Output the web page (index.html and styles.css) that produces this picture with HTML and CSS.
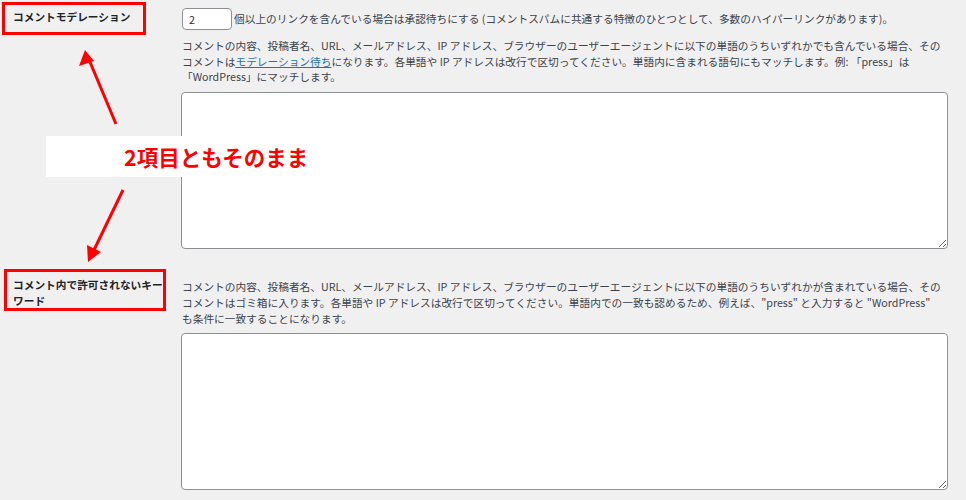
FILE: index.html
```html
<!DOCTYPE html>
<html lang="ja">
<head>
    <meta charset="UTF-8">
    <title>ディスカッション設定</title>
    <link rel="stylesheet" href="styles.css">
</head>
<body>
    <div class="page">
        <table class="form-table">
            <tr>
                <th>コメントモデレーション</th>
                <td>
                    <div class="links-line"><input class="small-text" type="text" value="2">個以上のリンクを含んでいる場合は承認待ちにする (コメントスパムに共通する特徴のひとつとして、多数のハイパーリンクがあります)。</div>
                    <p class="description">コメントの内容、投稿者名、URL、メールアドレス、IP アドレス、ブラウザーのユーザーエージェントに以下の単語のうちいずれかでも含んでいる場合、その<br>コメントは<a href="#">モデレーション待ち</a>になります。各単語や IP アドレスは改行で区切ってください。単語内に含まれる語句にもマッチします。例: 「press」は<br>「WordPress」にマッチします。</p>
                    <textarea class="keys"></textarea>
                </td>
            </tr>
            <tr>
                <th>コメント内で許可されないキーワード</th>
                <td>
                    <p class="description">コメントの内容、投稿者名、URL、メールアドレス、IP アドレス、ブラウザーのユーザーエージェントに以下の単語のうちいずれかが含まれている場合、その<br>コメントはゴミ箱に入ります。各単語や IP アドレスは改行で区切ってください。単語内での一致も認めるため、例えば、"press" と入力すると "WordPress"<br>も条件に一致することになります。</p>
                    <textarea class="keys"></textarea>
                </td>
            </tr>
        </table>

        <!-- annotations -->
        <div class="mark mark-1"></div>
        <div class="mark mark-2"></div>
        <div class="callout">2項目ともそのまま</div>
        <svg class="arrows" width="966" height="500" viewBox="0 0 966 500">
            <line x1="116" y1="124" x2="90" y2="62" stroke="#ff0000" stroke-width="3"/>
            <polygon points="85,50 79,66 94,61" fill="#ff0000"/>
            <line x1="123" y1="190" x2="94" y2="250" stroke="#ff0000" stroke-width="3"/>
            <polygon points="88,262 87,245 101,252" fill="#ff0000"/>
        </svg>
    </div>
</body>
</html>
```

FILE: styles.css
```css
body {
    margin: 0;
    background: #f0f0f1;
    font-family: "Noto Sans CJK JP", "Liberation Sans", sans-serif;
    font-size: 10.7px;
    color: #3c434a;
}

.page {
    position: relative;
    width: 966px;
    height: 500px;
    overflow: hidden;
}

.form-table {
    border-collapse: collapse;
}

.form-table th {
    width: 155px;
    padding: 13px 0 0 13px;
    vertical-align: top;
    text-align: left;
    font-weight: 700;
    color: #1d2327;
    line-height: 16px;
}

.form-table td {
    padding: 15px 0 15px 14px;
    vertical-align: top;
    line-height: 15.7px;
}

.form-table tr:first-child th {
    padding-top: 9px;
}

.form-table tr:first-child td {
    padding-top: 8px;
}

.links-line {
    display: flex;
    align-items: center;
    margin-bottom: 8px;
}

.small-text {
    width: 50px;
    height: 22px;
    box-sizing: border-box;
    margin: 0 2px 0 0;
    padding: 0 6px;
    border: 1px solid #8c8f94;
    border-radius: 4px;
    background: #fff;
    font-family: inherit;
    font-size: 10.7px;
    color: #2c3338;
}

.description {
    width: 770px;
    margin: 0 0 7px;
}

.description a {
    color: #2271b1;
}

.keys {
    display: block;
    width: 767px;
    height: 157px;
    box-sizing: border-box;
    margin: 0 0 0 -1px;
    border: 1px solid #8c8f94;
    border-radius: 4px;
    background: #fff;
}

.mark {
    position: absolute;
    border: 3px solid #ff0000;
}

.mark-1 {
    left: 2px;
    top: 2px;
    width: 138px;
    height: 27px;
}

.mark-2 {
    left: 4px;
    top: 269px;
    width: 156px;
    height: 36px;
}

.callout {
    position: absolute;
    left: 46px;
    top: 136px;
    width: 284px;
    height: 41px;
    padding-left: 78px;
    box-sizing: border-box;
    background: #fff;
    color: #ff0000;
    font-size: 21.5px;
    font-weight: 700;
    line-height: 41px;
}

.arrows {
    position: absolute;
    left: 0;
    top: 0;
}
```
